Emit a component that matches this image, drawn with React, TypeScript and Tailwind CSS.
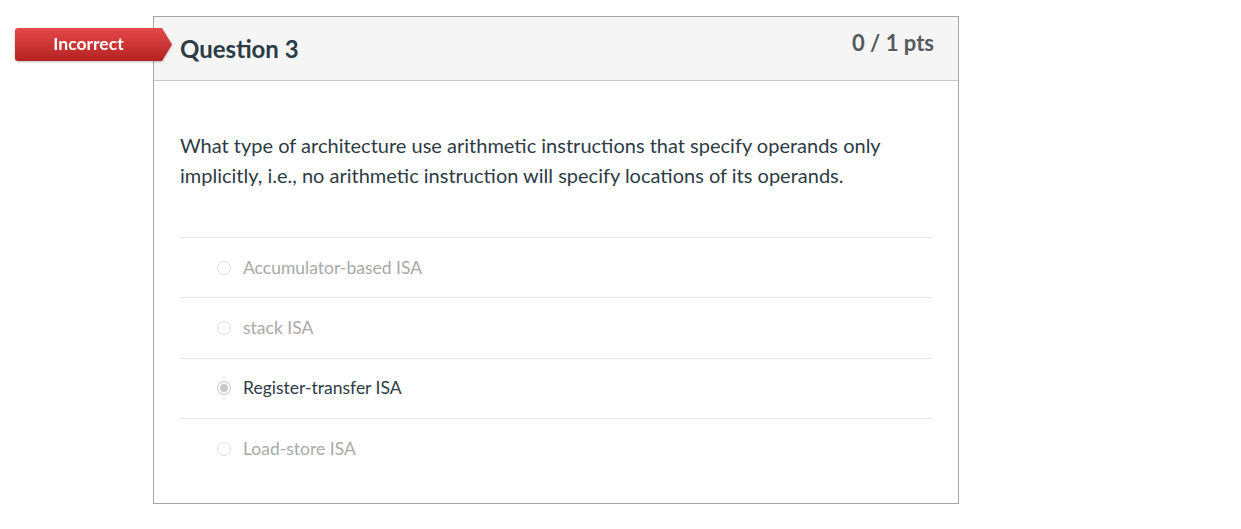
import React from 'react'

const answers = [
  { label: 'Accumulator-based ISA', selected: false },
  { label: 'stack ISA', selected: false },
  { label: 'Register-transfer ISA', selected: true },
  { label: 'Load-store ISA', selected: false },
]

function Radio({ selected }: { selected: boolean }) {
  if (selected) {
    return (
      <span className="flex h-[14px] w-[14px] items-center justify-center rounded-full border border-[#c4c4c4] bg-white">
        <span className="h-[8px] w-[8px] rounded-full bg-[#c8c8c8]" />
      </span>
    )
  }
  return <span className="block h-[14px] w-[14px] rounded-full border border-[#dcdcdc] bg-white" />
}

export default function App() {
  return (
    <div className="relative min-h-[529px] bg-white pt-[16px] font-['Lato','Noto_Sans',sans-serif]">
      <div className="absolute left-[15px] top-[28px] z-10 flex h-[33px] items-stretch drop-shadow-[0_1px_1px_rgba(0,0,0,0.25)]">
        <div className="flex w-[147px] items-center justify-center rounded-l-[3px] bg-gradient-to-b from-[#e54848] to-[#b42222] text-[17.5px] font-bold text-white">
          Incorrect
        </div>
        <div className="w-[10px] bg-gradient-to-b from-[#e54848] to-[#b42222] [clip-path:polygon(0_0,100%_50%,0_100%)]" />
      </div>

      <div className="ml-[153px] w-[806px] border border-[#a8a8a8] bg-white">
        <div className="flex h-[64px] justify-between border-b border-[#c7c7c7] bg-[#f5f5f5] pl-[26px] pr-[24px]">
          <h2 className="pt-[18px] text-[24px] font-bold leading-[28px] text-[#2d3b45]">Question 3</h2>
          <div className="pt-[13px] text-[22px] font-bold leading-[26px] text-[#555a5e]">0 / 1 pts</div>
        </div>

        <div className="px-[26px] pb-[24px] pt-[49px]">
          <p className="max-w-[740px] text-[20px] leading-[30px] text-[#2d3b45]">
            What type of architecture use arithmetic instructions that specify operands only implicitly, i.e., no
            arithmetic instruction will specify locations of its operands.
          </p>

          <div className="mt-[47px]">
            {answers.map((a) => (
              <div key={a.label} className="flex h-[60.4px] items-center border-t border-[#e6e6e6] pl-[37px]">
                <Radio selected={a.selected} />
                <span
                  className={
                    'ml-[12px] text-[17.5px] ' + (a.selected ? 'text-[#2d3b45]' : 'text-[#a9a9a9]')
                  }
                >
                  {a.label}
                </span>
              </div>
            ))}
          </div>
        </div>
      </div>
    </div>
  )
}
